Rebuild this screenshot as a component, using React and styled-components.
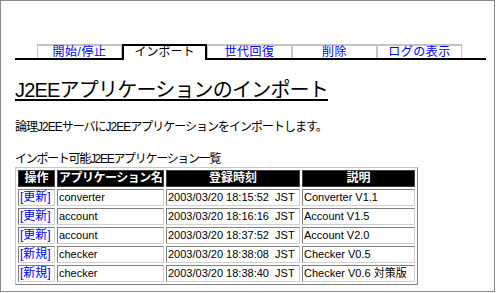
import React from "react";
import styled, { createGlobalStyle } from "styled-components";

const Global = createGlobalStyle`
  html, body { margin: 0; padding: 0; background: #fff; }
  body {
    font-family: "Liberation Sans", "Noto Sans CJK JP", sans-serif;
    font-size: 12px;
    color: #000;
    overflow: hidden;
  }
`;

const Frame = styled.div`
  box-sizing: border-box;
  width: 495px;
  height: 292px;
  border: 1px solid #8a8a8a;
  padding: 0 8px 0 14px;
  overflow: hidden;
`;

const TabBar = styled.div`
  margin-top: 43px;
  display: flex;
  align-items: flex-end;
  padding-left: 22px;
  border-bottom: 2px solid #000;
`;

const Tab = styled.div`
  box-sizing: border-box;
  width: 85px;
  text-align: center;
  font-size: 12px;
  line-height: 12px;
  letter-spacing: ${(p) => (p.$active ? "0" : "0.5px")};
  background: #fff;
  color: ${(p) => (p.$active ? "#000" : "#0000ff")};
  border-top: 2px solid ${(p) => (p.$active ? "#000" : "#c4c4c4")};
  border-left: ${(p) => (p.$active ? "2px solid #000" : "1px solid #c4c4c4")};
  border-right: ${(p) => (p.$active ? "2px solid #000" : "1px solid #c4c4c4")};
  height: ${(p) => (p.$active ? "16px" : "14px")};
  margin-bottom: ${(p) => (p.$active ? "-2px" : "0")};
  position: relative;
`;

const Heading = styled.h1`
  margin: 18px 0 0;
  font-size: 20px;
  line-height: 24px;
  font-weight: normal;
  letter-spacing: -0.8px;
  text-decoration: underline;
  text-underline-offset: 2px;
`;

const Text = styled.p`
  margin: ${(p) => p.$mt}px 0 0;
  font-size: 12px;
  line-height: 14px;
  letter-spacing: ${(p) => p.$ls || "-1px"};
`;

const Table = styled.table`
  margin-top: 1px;
  border-collapse: separate;
  border-spacing: 2px;
  table-layout: fixed;
  width: 401px;
  border: 1px solid;
  border-color: #c8c8c8 #808080 #808080 #c8c8c8;
`;

const Head = styled.th`
  box-sizing: border-box;
  background: #000;
  color: #fff;
  font-weight: bold;
  font-size: 12px;
  line-height: 13px;
  padding: 1px;
  border: 1px solid #404040;
  text-align: ${(p) => p.$align || "center"};
  letter-spacing: ${(p) => p.$ls || "0"};
  white-space: nowrap;
  overflow: hidden;
`;

const Cell = styled.td`
  box-sizing: border-box;
  font-size: ${(p) => (p.$op ? "12px" : "11px")};
  line-height: 13px;
  padding: 1px;
  border: 1px solid;
  border-color: #808080 #d0d0d0 #d0d0d0 #808080;
  color: ${(p) => (p.$op ? "#0000ff" : "#000")};
  white-space: pre;
  overflow: hidden;
`;

const tabs = ["開始/停止", "インポート", "世代回復", "削除", "ログの表示"];

const rows = [
  ["[更新]", "converter", "2003/03/20 18:15:52  JST", "Converter V1.1"],
  ["[更新]", "account", "2003/03/20 18:16:16  JST", "Account V1.5"],
  ["[更新]", "account", "2003/03/20 18:37:52  JST", "Account V2.0"],
  ["[新規]", "checker", "2003/03/20 18:38:08  JST", "Checker V0.5"],
  ["[新規]", "checker", "2003/03/20 18:38:40  JST", "Checker V0.6 対策版"],
];

export default function App() {
  return (
    <>
      <Global />
      <Frame>
        <TabBar>
          {tabs.map((t) => (
            <Tab key={t} $active={t === "インポート"}>
              {t}
            </Tab>
          ))}
        </TabBar>
        <Heading>J2EEアプリケーションのインポート</Heading>
        <Text $mt={18}>論理J2EEサーバにJ2EEアプリケーションをインポートします。</Text>
        <Text $mt={18} $ls="-1.3px">インポート可能J2EEアプリケーション一覧</Text>
        <Table>
          <colgroup>
            <col style={{ width: 37 }} />
            <col style={{ width: 107 }} />
            <col style={{ width: 134 }} />
            <col style={{ width: 113 }} />
          </colgroup>
          <thead>
            <tr>
              <Head>操作</Head>
              <Head $align="left" $ls="-0.5px">アプリケーション名</Head>
              <Head>登録時刻</Head>
              <Head>説明</Head>
            </tr>
          </thead>
          <tbody>
            {rows.map((r, i) => (
              <tr key={i}>
                <Cell $op>{r[0]}</Cell>
                <Cell>{r[1]}</Cell>
                <Cell>{r[2]}</Cell>
                <Cell>{r[3]}</Cell>
              </tr>
            ))}
          </tbody>
        </Table>
      </Frame>
    </>
  );
}
